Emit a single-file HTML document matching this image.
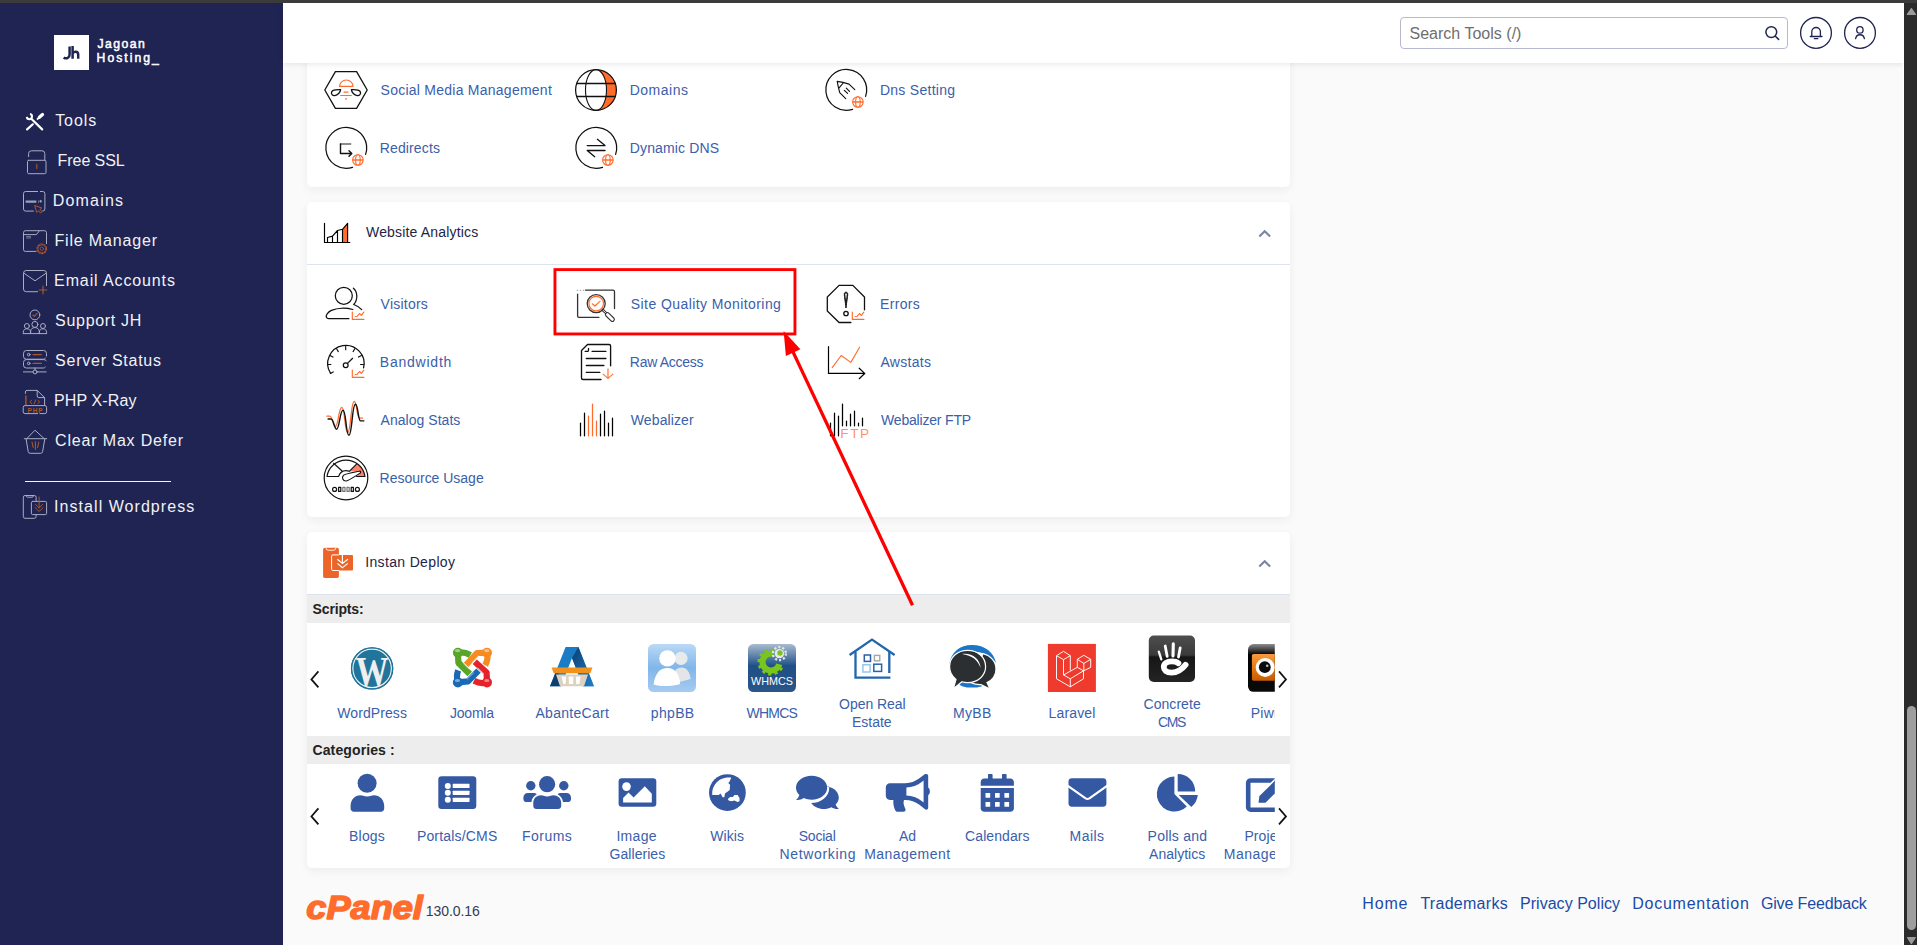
<!DOCTYPE html>
<html lang="en">
<head>
<meta charset="utf-8">
<title>cPanel - Tools</title>
<style>
*{box-sizing:border-box;margin:0;padding:0}
html,body{width:1917px;height:945px;overflow:hidden;background:#fafafa}
body{position:relative;font-family:"Liberation Sans",sans-serif;font-size:14px;color:#1f2552}
.t{position:absolute;line-height:20px;white-space:nowrap}
#topbar{position:absolute;left:0;top:0;width:1917px;height:3px;background:#3b3b3b;z-index:50}
#sidebar{position:absolute;left:0;top:3px;width:283px;height:942px;background:#1f2453}
#logo{position:absolute;left:53.8px;top:31.9px;width:35.3px;height:35px;background:#fff}
#sep{position:absolute;left:25px;top:477.6px;width:146px;height:1.5px;background:#f4f4f6}
#header{position:absolute;left:283px;top:3px;width:1621px;height:60px;background:#fff;box-shadow:0 1px 6px rgba(0,0,0,.10);z-index:20}
#search{position:absolute;left:1117.2px;top:14.2px;width:387.6px;height:31.6px;border:1px solid #b7bace;border-radius:4px;background:#fff}
#hdrtext{position:absolute;left:0;top:0;z-index:21}
#scroll{position:absolute;left:1903px;top:3px;width:14px;height:942px;background:#2b2b2b;border-left:1px solid #fff;z-index:40}
#scroll svg{position:absolute;left:0;top:0}
#thumb{position:absolute;left:3px;top:703px;width:9px;height:224px;background:#9e9e9e;border-radius:4.5px}
.panel{position:absolute;left:307px;width:983px;background:#fff;border-radius:5px;box-shadow:0 3px 10px rgba(0,0,0,.056)}
#p1{top:40px;height:147px}
#p2{top:202px;height:315px}
#p3{top:532px;height:335.5px;overflow:hidden}
.phead{position:absolute;left:0;top:0;width:100%;height:62.7px;border-bottom:1px solid #dde4f0}
.bar{position:absolute;left:0;width:983px;height:28px;background:#ededed}
#car{position:absolute;left:322px;top:624px;width:952.8px;height:243px;overflow:hidden}
#art{position:absolute;left:0;top:0;z-index:10}
#art2{position:absolute;left:0;top:0;z-index:30}
</style>
</head>
<body>
<div id="topbar"></div>
<div id="sidebar">
<div id="logo"></div>
<div id="sep"></div>
</div>
<div class="t" style="left:55.20px;top:111.00px;font-size:16px;letter-spacing:0.937px;color:#f2f2f5">Tools</div>
<div class="t" style="left:57.60px;top:151.00px;font-size:16px;letter-spacing:-0.070px;color:#f2f2f5">Free SSL</div>
<div class="t" style="left:52.70px;top:191.00px;font-size:16px;letter-spacing:1.195px;color:#f2f2f5">Domains</div>
<div class="t" style="left:54.40px;top:231.00px;font-size:16px;letter-spacing:0.850px;color:#f2f2f5">File Manager</div>
<div class="t" style="left:54.10px;top:271.00px;font-size:16px;letter-spacing:0.880px;color:#f2f2f5">Email Accounts</div>
<div class="t" style="left:55.10px;top:311.00px;font-size:16px;letter-spacing:0.691px;color:#f2f2f5">Support JH</div>
<div class="t" style="left:55.10px;top:351.00px;font-size:16px;letter-spacing:0.748px;color:#f2f2f5">Server Status</div>
<div class="t" style="left:54.10px;top:391.00px;font-size:16px;letter-spacing:0.100px;color:#f2f2f5">PHP X-Ray</div>
<div class="t" style="left:55.10px;top:431.00px;font-size:16px;letter-spacing:0.825px;color:#f2f2f5">Clear Max Defer</div>
<div class="t" style="left:54.10px;top:497.00px;font-size:16px;letter-spacing:1.050px;color:#f2f2f5">Install Wordpress</div>
<div class="t" style="left:97.50px;top:34.00px;font-size:12.2px;letter-spacing:1.459px;color:#fff;-webkit-text-stroke:.5px #fff">Jagoan</div>
<div class="t" style="left:96.60px;top:48.00px;font-size:12.2px;letter-spacing:2.011px;color:#fff;-webkit-text-stroke:.5px #fff">Hosting_</div>
<div id="header">
<div id="search"></div>
</div>
<div class="panel" id="p1"></div>
<div class="panel" id="p2"><div class="phead"></div></div>
<div class="panel" id="p3"><div class="phead"></div><div class="bar" style="top:62.5px"></div><div class="bar" style="top:203.7px"></div></div>
<div class="t" style="left:380.60px;top:80.00px;font-size:14px;letter-spacing:0.247px;color:#3a60ab">Social Media Management</div>
<div class="t" style="left:629.70px;top:80.00px;font-size:14px;letter-spacing:0.510px;color:#3a60ab">Domains</div>
<div class="t" style="left:879.90px;top:80.00px;font-size:14px;letter-spacing:0.281px;color:#3a60ab">Dns Setting</div>
<div class="t" style="left:379.70px;top:138.00px;font-size:14px;letter-spacing:0.146px;color:#3a60ab">Redirects</div>
<div class="t" style="left:629.80px;top:138.00px;font-size:14px;letter-spacing:0.133px;color:#3a60ab">Dynamic DNS</div>
<div class="t" style="left:380.60px;top:294.00px;font-size:14px;letter-spacing:0.222px;color:#3a60ab">Visitors</div>
<div class="t" style="left:630.80px;top:294.00px;font-size:14px;letter-spacing:0.420px;color:#3a60ab">Site Quality Monitoring</div>
<div class="t" style="left:880.00px;top:294.00px;font-size:14px;letter-spacing:0.338px;color:#3a60ab">Errors</div>
<div class="t" style="left:379.80px;top:352.00px;font-size:14px;letter-spacing:0.776px;color:#3a60ab">Bandwidth</div>
<div class="t" style="left:629.80px;top:352.00px;font-size:14px;letter-spacing:-0.280px;color:#3a60ab">Raw Access</div>
<div class="t" style="left:880.40px;top:352.00px;font-size:14px;letter-spacing:0.290px;color:#3a60ab">Awstats</div>
<div class="t" style="left:380.60px;top:410.00px;font-size:14px;letter-spacing:0.029px;color:#3a60ab">Analog Stats</div>
<div class="t" style="left:630.80px;top:410.00px;font-size:14px;letter-spacing:0.109px;color:#3a60ab">Webalizer</div>
<div class="t" style="left:881.00px;top:410.00px;font-size:14px;letter-spacing:-0.182px;color:#3a60ab">Webalizer FTP</div>
<div class="t" style="left:379.60px;top:468.00px;font-size:14px;letter-spacing:-0.015px;color:#3a60ab">Resource Usage</div>
<div class="t" style="left:366.00px;top:222.00px;font-size:14px;letter-spacing:0.167px;color:#1d2447">Website Analytics</div>
<div class="t" style="left:365.20px;top:552.00px;font-size:14px;letter-spacing:0.349px;color:#1d2447">Instan Deploy</div>
<div class="t" style="left:312.60px;top:599.00px;font-size:14px;letter-spacing:-0.152px;color:#222;font-weight:bold">Scripts:</div>
<div class="t" style="left:312.50px;top:740.00px;font-size:14px;letter-spacing:0.114px;color:#222;font-weight:bold">Categories :</div>
<div id="car">
<div class="t" style="left:15.30px;top:79.00px;font-size:14px;letter-spacing:0.077px;color:#3a60ab">WordPress</div>
<div class="t" style="left:128.00px;top:79.00px;font-size:14px;letter-spacing:-0.229px;color:#3a60ab">Joomla</div>
<div class="t" style="left:213.50px;top:79.00px;font-size:14px;letter-spacing:0.285px;color:#3a60ab">AbanteCart</div>
<div class="t" style="left:328.80px;top:79.00px;font-size:14px;letter-spacing:0.326px;color:#3a60ab">phpBB</div>
<div class="t" style="left:424.50px;top:79.00px;font-size:14px;letter-spacing:-0.749px;color:#3a60ab">WHMCS</div>
<div class="t" style="left:517.10px;top:70.00px;font-size:14px;letter-spacing:-0.040px;color:#3a60ab">Open Real</div>
<div class="t" style="left:530.00px;top:88.00px;font-size:14px;letter-spacing:-0.021px;color:#3a60ab">Estate</div>
<div class="t" style="left:630.90px;top:79.00px;font-size:14px;letter-spacing:0.333px;color:#3a60ab">MyBB</div>
<div class="t" style="left:726.60px;top:79.00px;font-size:14px;letter-spacing:0.149px;color:#3a60ab">Laravel</div>
<div class="t" style="left:821.50px;top:70.00px;font-size:14px;letter-spacing:0.054px;color:#3a60ab">Concrete</div>
<div class="t" style="left:836.10px;top:88.00px;font-size:14px;letter-spacing:-1.436px;color:#3a60ab">CMS</div>
<div class="t" style="left:928.70px;top:79.00px;font-size:14px;letter-spacing:0.249px;color:#3a60ab">Piwigo</div>
<div class="t" style="left:27.10px;top:202.00px;font-size:14px;letter-spacing:0.170px;color:#3a60ab">Blogs</div>
<div class="t" style="left:94.90px;top:202.00px;font-size:14px;letter-spacing:0.177px;color:#3a60ab">Portals/CMS</div>
<div class="t" style="left:200.00px;top:202.00px;font-size:14px;letter-spacing:0.470px;color:#3a60ab">Forums</div>
<div class="t" style="left:294.40px;top:202.00px;font-size:14px;letter-spacing:0.319px;color:#3a60ab">Image</div>
<div class="t" style="left:287.60px;top:220.00px;font-size:14px;letter-spacing:0.045px;color:#3a60ab">Galleries</div>
<div class="t" style="left:388.30px;top:202.00px;font-size:14px;letter-spacing:0.041px;color:#3a60ab">Wikis</div>
<div class="t" style="left:476.70px;top:202.00px;font-size:14px;letter-spacing:-0.204px;color:#3a60ab">Social</div>
<div class="t" style="left:457.40px;top:220.00px;font-size:14px;letter-spacing:0.673px;color:#3a60ab">Networking</div>
<div class="t" style="left:577.10px;top:202.00px;font-size:14px;letter-spacing:-0.138px;color:#3a60ab">Ad</div>
<div class="t" style="left:542.20px;top:220.00px;font-size:14px;letter-spacing:0.464px;color:#3a60ab">Management</div>
<div class="t" style="left:643.10px;top:202.00px;font-size:14px;letter-spacing:0.073px;color:#3a60ab">Calendars</div>
<div class="t" style="left:747.60px;top:202.00px;font-size:14px;letter-spacing:0.458px;color:#3a60ab">Mails</div>
<div class="t" style="left:825.60px;top:202.00px;font-size:14px;letter-spacing:0.224px;color:#3a60ab">Polls and</div>
<div class="t" style="left:827.10px;top:220.00px;font-size:14px;letter-spacing:0.010px;color:#3a60ab">Analytics</div>
<div class="t" style="left:922.40px;top:202.00px;font-size:14px;letter-spacing:0.086px;color:#3a60ab">Project</div>
<div class="t" style="left:901.80px;top:220.00px;font-size:14px;letter-spacing:0.464px;color:#3a60ab">Management</div>
</div>
<div id="hdrtext">
<div class="t" style="left:1409.50px;top:24.00px;font-size:16px;letter-spacing:0.013px;color:#6e6e6e">Search Tools (/)</div>
</div>
<div class="t" style="left:425.80px;top:901.00px;font-size:14px;letter-spacing:-0.073px;color:#333c55">130.0.16</div>
<div class="t" style="left:1362.30px;top:894.00px;font-size:16px;letter-spacing:0.840px;color:#1b4aa8">Home</div>
<div class="t" style="left:1420.40px;top:894.00px;font-size:16px;letter-spacing:0.282px;color:#1b4aa8">Trademarks</div>
<div class="t" style="left:1520.00px;top:894.00px;font-size:16px;letter-spacing:0.032px;color:#1b4aa8">Privacy Policy</div>
<div class="t" style="left:1632.20px;top:894.00px;font-size:16px;letter-spacing:0.757px;color:#1b4aa8">Documentation</div>
<div class="t" style="left:1760.90px;top:894.00px;font-size:16px;letter-spacing:-0.142px;color:#1b4aa8">Give Feedback</div>
<svg id="art" width="1917" height="945" viewBox="0 0 1917 945">
<!-- ===== panel 1 icons ===== -->
<g fill="none" stroke="#111" stroke-width="1.3" stroke-linejoin="round" stroke-linecap="round">
  <!-- social media hexagon -->
  <path d="M324.8 90 L335.4 71.7 L356.6 71.7 L367.2 90 L356.6 108.3 L335.4 108.3 Z"/>
  <path d="M340.6 89.6 C337 89.4 333 89.4 331.8 91.6 C330.6 94 332.6 95.8 334.8 95.6 C337.6 95.2 340.4 92.4 340.6 89.6 Z"/>
  <path d="M351.4 89.6 C355 89.4 359 89.4 360.2 91.6 C361.4 94 359.4 95.8 357.2 95.6 C354.4 95.2 351.6 92.4 351.4 89.6 Z"/>
  <g stroke="#ff6c2c" stroke-width="1.1">
    <path d="M339.6 86.4 A6.7 6.4 0 0 1 353 86.4 Z"/>
    <path d="M344 92.1 H348" stroke-width="1.4"/>
    <path d="M340.6 95.5 H351.4"/>
    <path d="M345.6 98.8 H346.6" stroke-width="1.2"/>
  </g>
  <!-- domains globe -->
  <path d="M596 69.6 A10.5 20.4 0 0 1 596 110.4 A20.4 20.4 0 0 0 596 69.6 Z" fill="#ff6c2c" stroke="none"/>
  <circle cx="596" cy="90" r="20.4" stroke-width="1.25"/>
  <ellipse cx="596" cy="90" rx="10.5" ry="20.4" stroke-width="1.1"/>
  <path d="M576.8 83.5 H615.2 M576.8 96.5 H615.2" stroke-width="1.35"/>
  <!-- dns setting -->
  <path d="M865.6 96.4 A20.4 20.4 0 1 0 852.6 109.3" stroke-width="1.25"/>
  <path d="M854.8 89.6 L849 84.1 Q843 82.2 837.2 81.4 Q838.2 87 839.7 92.6 L845.7 98.6 M843.2 83 L839.1 87.9 M844.3 90.3 L847.6 93.4 M846.3 88.2 L849.5 91.4" stroke-width="1.15"/>
  <!-- redirects -->
  <path d="M365.6 154.4 A20.4 20.4 0 1 0 352.6 167.3" stroke-width="1.25"/>
  <path d="M350.7 143.9 H340.5" stroke="#666" stroke-width="1.5"/>
  <path d="M340.5 143.9 V153.5 H351.6 M349 150.8 L351.8 153.5 L349 156.2" stroke-width="1.4"/>
  <!-- dynamic dns -->
  <path d="M615.6 154.4 A20.4 20.4 0 1 0 602.6 167.3" stroke-width="1.25"/>
  <path d="M587.2 145.6 H605 L597.4 139.3 M605 150.5 H587.2 L594.7 156.7" stroke-width="1.3"/>
</g>
<!-- small orange globes -->
<g fill="none" stroke="#ff6c2c" stroke-width="1.1">
  <g id="og1"><circle cx="857.9" cy="102" r="5.3"/><ellipse cx="857.9" cy="102" rx="2.3" ry="5.3"/><path d="M852.6 102 H863.2" stroke-width="1.5"/></g>
  <g><circle cx="357.9" cy="160" r="5.3"/><ellipse cx="357.9" cy="160" rx="2.3" ry="5.3"/><path d="M352.6 160 H363.2" stroke-width="1.5"/></g>
  <g><circle cx="607.9" cy="160" r="5.3"/><ellipse cx="607.9" cy="160" rx="2.3" ry="5.3"/><path d="M602.6 160 H613.2" stroke-width="1.5"/></g>
</g>

<!-- ===== panel 2 header icon ===== -->
<g fill="none" stroke="#000" stroke-width="1.15" stroke-linejoin="round" stroke-linecap="round">
  <path d="M342.5 229.3 L347.6 223.3 V242.5 H342.5 Z" fill="#ff6c2c" stroke="none"/>
  <path d="M324.5 223.3 V242.5 H349.8"/>
  <path d="M327.5 242.5 V237.5 L332.5 236.1 L337.5 230.5 L342.5 229.3 L347.6 223.3 V242.5 M332.5 236.1 V242.5 M337.5 230.5 V242.5 M342.5 229.3 V242.5"/>
</g>
<!-- chevrons -->
<g fill="none" stroke="#7a84a4" stroke-width="2.1" stroke-linecap="butt">
  <path d="M1259.3 236.6 L1264.7 231.2 L1270.1 236.6"/>
  <path d="M1259.3 566.6 L1264.7 561.2 L1270.1 566.6"/>
</g>
<!-- ===== panel 2 icons ===== -->
<g fill="none" stroke="#111" stroke-width="1.25" stroke-linejoin="round" stroke-linecap="round">
  <!-- visitors -->
  <circle cx="343.8" cy="295.8" r="8.5"/>
  <path d="M353.4 288.2 C357.6 291.8 358.2 299.6 353.7 304.5 C357 305.6 359.6 307.4 361.7 309.6"/>
  <path d="M352.8 309.5 C346 307.6 337 307.8 331.4 310.4 C327.6 312.2 325.6 315.6 326.4 317.2 C326.8 318.1 327.4 318.5 328.6 318.5 H348.9"/>
  <!-- bandwidth -->
  <path d="M330.6 373.4 A18.2 18.2 0 1 1 363.6 367.8"/>
  <path d="M327.5 364.5 H330.9 M360.5 364.5 H363.9 M345.7 346.3 V349.7 M330 355.4 L332.9 357.1 M336.6 348.7 L338.3 351.6 M354.8 348.7 L353.1 351.6 M361.4 355.4 L358.5 357.1 M330.4 373.5 L333.2 371.9" stroke-width="1.15"/>
  <circle cx="345.7" cy="365.2" r="2.4"/>
  <path d="M347.5 363.4 L352.6 358.3"/>
  <!-- analog stats -->
  <path d="M326.9 416.2 H329.7 C332.6 416.2 333 426.4 335.3 426.4 C338.4 426.4 338.6 407.4 341.8 407.4 C345 407.4 344.6 432.5 347.7 432.5 C351 432.5 350.8 401.4 354.2 401.4 C357 401.4 356.8 418.1 359.4 418.1 H362.6" stroke="#ff6c2c" stroke-width="1.3"/>
  <path d="M328.1 419 H330.9 C333.8 419 334.2 429.2 336.5 429.2 C339.6 429.2 339.8 410.2 343 410.2 C346.2 410.2 345.8 435.3 348.9 435.3 C352.2 435.3 352 404.2 355.4 404.2 C358.2 404.2 358 420.9 360.6 420.9 H363.8" stroke-width="1.4"/>
  <!-- resource usage -->
  <circle cx="346" cy="478" r="21.8" stroke-width="1.2"/>
  <path d="M357 463.6 A23 23 0 0 1 365 476.5 H356.4 L360.6 471.8 L349.3 471.3 Z" fill="#f9836a" stroke="none"/>
  <path d="M327 476.5 H338.6 C339.6 473.4 342.4 470.6 346 470.6 C347.4 470.6 348.4 470.9 349.3 471.3 M327 476.5 A19.2 19.2 0 0 1 365 476.5 H356.6 M333.6 463.3 L342.4 471.3 M357 463.6 L349.3 471.3" stroke-width="1.15"/>
  <path d="M343.4 475.4 C341.6 477.4 342.6 481.2 346.2 481 C348.2 480.9 356 475.8 360 473.2 C361.2 472.4 360.6 470.8 359.2 471.2 C355 472.2 345.2 473.8 343.4 475.4 Z" fill="#fff" stroke-width="1.15"/>
  <g stroke-width="1.2"><circle cx="334.6" cy="489.4" r="2"/><circle cx="357.4" cy="489.4" r="2"/>
  <rect x="338.6" y="487.4" width="2.2" height="4"/><rect x="342.8" y="487.4" width="2.2" height="4" stroke="#777"/><rect x="347" y="487.4" width="2.2" height="4" stroke="#777"/><rect x="351.2" y="487.4" width="2.2" height="4"/></g>
  <!-- site quality monitoring -->
  <g stroke="#333" stroke-width="1.3">
    <path d="M585.5 290.2 H613 Q614.5 290.2 614.5 291.7 V308.5"/>
    <path d="M577.6 294.2 V316 Q577.6 317.4 579 317.4 H598.9"/>
    <path d="M577.2 290.2 h.5 M580.2 290.2 h.5 M583.2 290.2 h.5" stroke="#999" stroke-width="1.1"/>
    <path d="M602.8 310 L606.6 313.6" stroke-width="2.6"/>
    <path d="M603.2 310.4 L606.2 313.2" stroke="#fff" stroke-width="0.9"/>
    <path d="M607.4 314.6 L612.4 319.4" stroke-width="5" />
    <path d="M607.4 314.6 L612.4 319.4" stroke="#fff" stroke-width="2.8"/>
    <circle cx="596.2" cy="303.6" r="9"/>
  </g>
  <circle cx="596.2" cy="303.6" r="7.3" stroke="#ff6c2c" stroke-width="1.2"/>
  <path d="M592.4 303.8 L594.8 306 L600 301.4" stroke="#ff6c2c" stroke-width="1.2"/>
  <!-- raw access -->
  <path d="M610.6 365.7 V346 Q610.6 344.5 609.1 344.5 H587.5 L581.5 350.4 V378 Q581.5 379.5 583 379.5 H601" stroke-width="1.35"/>
  <path d="M588.5 348.4 V350.2 Q588.5 351.4 587.3 351.4 H585.2 M592.1 351.4 H605.9 M586.3 358.5 H605.9 M586.3 365.5 H603.9 M586.3 372.4 H599.8" stroke-width="1.3"/>
  <path d="M608 369 V378" stroke="#ff9c70" stroke-width="1.7"/>
  <path d="M603.1 374.1 L608 378.4 L612.8 374.1" stroke="#ff7a3e" stroke-width="1.2"/>
  <!-- webalizer -->
  <path d="M580.5 423.1 V435.8 M584.5 413.2 V435.8 M600.5 414.2 V435.8 M604.5 411.2 V435.8 M608.5 423.2 V435.8 M612.5 418.2 V435.8" stroke="#000" stroke-width="1.25"/>
  <path d="M588.5 416.1 V435.8 M592.5 404.2 V435.8 M596.5 421.1 V435.8" stroke="#ff6c2c" stroke-width="1.25"/>
  <!-- errors -->
  <path d="M864.5 309.8 V297 L852.8 285.3 H839.1 L827.3 297 V310.9 L839.1 322.5 H850.9" stroke-width="1.3" stroke-linejoin="miter"/>
  <path d="M846 307.6 C845.2 301 844.3 296.6 844.3 294 C844.3 291.6 847.7 291.6 847.7 294 C847.7 296.6 846.8 301 846 307.6 Z" stroke-width="1" fill="#111"/>
  <path d="M846 300 C845.6 297.4 845.3 295.4 845.3 294.2 C845.3 293 846.7 293 846.7 294.2 C846.7 295.4 846.4 297.4 846 300 Z" fill="#fff" stroke="none"/>
  <circle cx="846" cy="313.5" r="2.2" stroke-width="1.3"/>
  <!-- awstats -->
  <path d="M828.5 346.5 V373.4 H864.7 M859.2 368.2 L864.7 373.4 L859.2 378.7" stroke="#000" stroke-width="1.2" stroke-linejoin="miter"/>
  <path d="M832.2 367.6 L841.2 355.5 L850.8 362.4 L859.6 347.2" stroke="#ff6c2c" stroke-width="1.1"/>
  <!-- webalizer ftp -->
  <path d="M830.5 423.1 V435.8 M834.5 413.2 V435.8 M838.5 416.1 V435.8 M842.5 404.2 V425.8 M846.5 421.1 V425.8 M850.5 414.2 V425.8 M854.5 411.2 V425.8 M858.5 423.2 V425.8 M862.5 418.2 V425.8" stroke="#000" stroke-width="1.25"/>
</g>
<text x="840.3" y="438.4" font-family="Liberation Sans, sans-serif" font-size="13.6" letter-spacing="1.6" fill="#ff7d45" fill-opacity=".85">FTP</text>
<!-- orange mini charts -->
<g fill="none" stroke="#ff6c2c" stroke-width="1.15" stroke-linecap="round" stroke-linejoin="round">
  <path d="M352.3 312.1 V319.4 H363.9 M355.2 316.5 L357.3 316.2 L359.5 313.5 L361.4 315.4 L363.8 312.2"/>
  <path d="M352.3 370.1 V377.4 H363.9 M355.2 374.5 L357.3 374.2 L359.5 371.5 L361.4 373.4 L363.8 370.2"/>
  <path d="M852.3 312.1 V319.4 H863.9 M855.2 316.5 L857.3 316.2 L859.5 313.5 L861.4 315.4 L863.8 312.2"/>
</g>

<!-- ===== panel 3 header icon ===== -->
<g>
  <rect x="323.1" y="547.8" width="15.8" height="30.1" rx="1.7" fill="#ec6428"/>
  <path d="M325.9 548 Q326.2 550.2 328.2 550.2 H333.6 Q335.6 550.2 335.9 548" fill="none" stroke="#fff" stroke-width=".9"/>
  <rect x="331.6" y="554.9" width="21.4" height="15.6" rx="1" fill="#ec6428"/>
  <path d="M338.9 554.9 H332.8 Q331.6 554.9 331.6 556.1 V569.3 Q331.6 570.5 332.8 570.5 H338.9" fill="none" stroke="#fff" stroke-width="1"/>
  <path d="M342.4 555 V563 M337.4 559.2 L342.4 563.4 L347.9 559.2 M337.4 563.4 L342.4 567.7 L347.9 563.4" fill="none" stroke="#fff" stroke-width="1.15"/>
</g>
<!-- carousel arrows -->
<g fill="none" stroke="#111" stroke-width="1.7">
  <path d="M318.4 671.4 L311.4 679.4 L318.4 687.4"/>
  <path d="M1279 671.4 L1286 679.4 L1279 687.4"/>
  <path d="M318.4 808.4 L311.4 816.4 L318.4 824.4"/>
  <path d="M1279 808.4 L1286 816.4 L1279 824.4"/>
</g>
<defs>
  <linearGradient id="gphp" x1="0" y1="0" x2="0" y2="1"><stop offset="0" stop-color="#bcd9f6"/><stop offset=".5" stop-color="#80b6ea"/><stop offset="1" stop-color="#a6cbf1"/></linearGradient>
  <linearGradient id="gwh" x1="0" y1="0" x2="0" y2="1"><stop offset="0" stop-color="#a9bbd0"/><stop offset=".42" stop-color="#2a5a8e"/><stop offset=".45" stop-color="#1f4f86"/><stop offset="1" stop-color="#2a5689"/></linearGradient>
  <linearGradient id="gcc" x1="0" y1="0" x2="0" y2="1"><stop offset="0" stop-color="#4e4e4e"/><stop offset=".42" stop-color="#3a3a3a"/><stop offset=".46" stop-color="#161616"/><stop offset="1" stop-color="#242424"/></linearGradient>
  <linearGradient id="gpw" x1="0" y1="0" x2="0" y2="1"><stop offset="0" stop-color="#8c8c8c"/><stop offset=".17" stop-color="#222"/><stop offset=".22" stop-color="#000"/><stop offset="1" stop-color="#0a0a0a"/></linearGradient>
  <linearGradient id="gpo" x1="0" y1="0" x2="0" y2="1"><stop offset="0" stop-color="#f79a40"/><stop offset=".5" stop-color="#e97a12"/><stop offset="1" stop-color="#c65c00"/></linearGradient>
  <linearGradient id="gab" x1="0" y1="0" x2="1" y2="1"><stop offset="0" stop-color="#0c3f70"/><stop offset="1" stop-color="#1f7fca"/></linearGradient>
  <clipPath id="cpiw"><rect x="1240" y="640" width="34.8" height="60"/></clipPath>
  <clipPath id="cprj"><rect x="1230" y="770" width="44.8" height="100"/></clipPath>
</defs>
<!-- WordPress -->
<g>
  <circle cx="372.1" cy="668.4" r="21.2" fill="#21759b"/>
  <circle cx="372.1" cy="668.4" r="19.4" fill="none" stroke="#f1f3f4" stroke-width="1.5"/>
  <text x="372" y="686.4" text-anchor="middle" font-family="Liberation Serif, serif" font-weight="bold" font-size="42" fill="#efefef" textLength="33" lengthAdjust="spacingAndGlyphs">W</text>
  <circle cx="372.1" cy="668.4" r="20.5" fill="none" stroke="#21759b" stroke-width="1.4"/>
</g>
<!-- Joomla -->
<g fill="none" stroke-width="6.2" stroke-linejoin="round">
  <g stroke="#58a527"><path d="M470.4 655 Q464 651.4 457.9 652.7 L458.4 662.8 L469.6 673.9"/><circle cx="457.9" cy="652.7" r="2.2" stroke-width="5.6" fill="#58a527"/></g>
  <g stroke="#f68b24"><path d="M485.2 665.2 Q488.6 659 487 652.7 L477 653 L466.1 664.9"/><circle cx="487" cy="652.7" r="2.2" stroke-width="5.6" fill="#f68b24"/></g>
  <g stroke="#e5232b"><path d="M474 680.8 Q480.6 684.2 487 682.4 L486.6 672.6 L474.8 661.8"/><circle cx="487" cy="682.4" r="2.2" stroke-width="5.6" fill="#e5232b"/></g>
  <g stroke="#1a69b4"><path d="M458.2 670.4 Q455.8 676.6 457.9 682.4 L468 681.4 L478.5 670.7"/><circle cx="457.9" cy="682.4" r="2.2" stroke-width="5.6" fill="#1a69b4"/></g>
  <path d="M458.4 662.8 L469.6 673.9" stroke="#58a527"/>
  <g stroke="#fff" stroke-width="1" opacity=".55" stroke-linecap="round"><path d="M463.4 663.6 L469 669.2"/><path d="M478.6 656 L472 662.4"/><path d="M483.6 673.4 L478 668"/><path d="M467.4 679 L473.6 672.8"/></g>
  <g fill="#fff" stroke="none" opacity=".45"><ellipse cx="457.6" cy="650.6" rx="2.8" ry="1.6"/><ellipse cx="486.8" cy="650.6" rx="2.8" ry="1.6"/><ellipse cx="486.8" cy="680.4" rx="2.6" ry="1.5"/><ellipse cx="457.4" cy="680.4" rx="2.6" ry="1.5"/></g>
</g>
<!-- AbanteCart -->
<g>
  <path d="M550 686.2 L565.6 647 L578.4 647 L593.9 686.2 L583 686.2 L572 658 L561 686.2 Z" fill="#1b7cc6"/>
  <path d="M572 658 L578.4 647 L593.9 686.2 L583 686.2 Z" fill="url(#gab)"/>
  <path d="M550 686.2 L556.4 670.4 L562 678 L561 686.2 Z" fill="#0d3f73"/>
  <path d="M551.6 667.6 L592.4 667.6 L590.4 673.2 L553.6 673.2 Z" fill="#f0921e"/>
  <path d="M556 674.4 L588 674.4 L584 686.2 L560 686.2 Z" fill="#ddd2c0"/>
  <path d="M561.4 676.4 L566.2 676.4 L565.6 684 L563.4 684 Z M568.6 676.4 L573.4 676.4 L573.2 684 L569 684 Z M575.8 676.4 L580.6 676.4 L579.4 684 L576.2 684 Z" fill="#fff"/>
  <path d="M572 658 L577.4 671.8 L566.6 671.8 Z" fill="#fff" opacity="0"/>
</g>
<!-- phpBB -->
<g>
  <rect x="648" y="644" width="48" height="48" rx="5.5" fill="url(#gphp)"/>
  <circle cx="681" cy="658.4" r="6.6" fill="#e9eaec"/>
  <path d="M672 684 C672 672 676 667.4 681.4 667.4 C687 667.4 689.6 672 690.6 679 Z" fill="#e3e5e8"/>
  <circle cx="667.4" cy="658.4" r="8.2" fill="#fff"/>
  <path d="M653.6 684.4 C655 673.4 660 668 667.4 668 C675 668 679.4 674 680.2 684 C672 686.6 661 686.6 653.6 684.4 Z" fill="#fff"/>
</g>
<!-- WHMCS -->
<g>
  <rect x="748" y="644" width="48" height="48" rx="5.5" fill="url(#gwh)"/>
  <path d="M773.2 653.8 A8.5 8.5 0 1 0 779.2 664.2" fill="none" stroke="#79c51c" stroke-width="6.2"/>
  <path d="M774.16 650.2 A12.2 12.2 0 1 0 782.8 665.2" fill="none" stroke="#79c51c" stroke-width="2.8" stroke-dasharray="3.1 3.3"/>
  <circle cx="779.4" cy="653.6" r="4.7" fill="#e6e8ea"/>
  <circle cx="779.4" cy="653.6" r="6.5" fill="none" stroke="#e6e8ea" stroke-width="2.2" stroke-dasharray="2.1 2"/>
  <circle cx="780" cy="653" r="2.7" fill="#79c51c"/>
  <text x="772" y="685" text-anchor="middle" font-family="Liberation Sans, sans-serif" font-size="10.6" fill="#fff" textLength="42" lengthAdjust="spacingAndGlyphs">WHMCS</text>
</g>
<!-- Open Real Estate -->
<g fill="none" stroke="#2266ae" stroke-width="2.3">
  <path d="M849.6 655 L872 639.6 L894.6 655" stroke-linejoin="miter"/>
  <path d="M855.5 652 V677.6 H890.4 M889.3 652 V673"/>
  <rect x="864.3" y="655" width="6.2" height="6.4" stroke-width="1.5" stroke="#2a5ea6"/>
  <rect x="874.4" y="655.4" width="5.4" height="5.4" stroke-width="1.4" stroke="#a6a6a6"/>
  <rect x="862.9" y="664.8" width="7.2" height="7.2" stroke-width="1.4" stroke="#8fc3ee"/>
  <rect x="873.8" y="664.2" width="7.8" height="7.2" stroke-width="1.5" stroke="#2266ae"/>
</g>

<!-- MyBB -->
<g>
  <path d="M949.4 664 C951 652 960 645 972 645 C985 645 994 652.4 996 663 C990 655 982 651.4 972 651.4 C962 651.4 954 655.6 949.4 664 Z" fill="#1b76c9"/>
  <ellipse cx="972" cy="683.6" rx="13" ry="4" fill="#1b76c9"/>
  <path d="M983 653.6 C991 655.6 996 662 996 669 C996 675 992.4 680 987 682.6 L990 689 L981 684.6 C977 684.8 974 684 971 682.6 Z" fill="#2b2f31" stroke="#fff" stroke-width="1.2"/>
  <path d="M967.6 650.4 C978 650.4 985.6 657.4 985.6 666.6 C985.6 675.6 978 682.6 967.6 682.6 C965.6 682.6 963.6 682.4 962 681.8 L953.4 688.6 L956 679.4 C952 676.4 949.6 671.8 949.6 666.6 C949.6 657.4 957.4 650.4 967.6 650.4 Z" fill="#2b2f31" stroke="#fff" stroke-width="1.2"/>
  <path d="M962 654 C972 652.6 980 659 980.6 668 C978 660 972 655.4 962 654 Z" fill="#fff"/>
</g>
<!-- Laravel -->
<g>
  <rect x="1047.9" y="643.9" width="48" height="48.1" fill="#ef3b2d"/>
  <g fill="none" stroke="#fff" stroke-width=".95" stroke-linejoin="round">
    <path d="M1056.5 655.7 L1063.5 651.3 L1070.3 655.7 L1063.5 659.6 Z"/>
    <path d="M1056.5 655.7 V678.8 L1070.3 686.8 L1083.5 678.8 V670.8"/>
    <path d="M1063.5 659.6 V675 L1070.3 678.8 L1083.5 670.8 M1070.3 655.7 V670.4 M1063.5 675 L1077.3 667.3 L1083.5 670.8 M1070.3 678.8 V686.8"/>
    <path d="M1083.8 655.3 L1077.3 659.3 L1083.8 663.4 L1090.7 659.3 Z M1077.3 659.3 V667.3 M1090.7 659.3 V667.4 L1083.5 670.8 M1083.8 663.4 V670.8"/>
  </g>
</g>
<!-- Concrete CMS -->
<g>
  <rect x="1148.8" y="635.6" width="46.2" height="46.4" rx="5" fill="url(#gcc)"/>
  <g fill="none" stroke="#fff" stroke-linecap="round">
    <path d="M1158.8 651.6 L1161.3 659.4" stroke-width="2.3"/>
    <path d="M1165.2 646 L1167.2 656.4" stroke-width="2.8"/>
    <path d="M1173.3 643.8 L1173 656" stroke-width="3.1"/>
    <path d="M1180.2 647.8 L1178.5 657" stroke-width="2.8"/>
    <path d="M1185.6 664.8 C1181.6 670 1177.4 672.6 1171.6 672.6 C1166.2 672.6 1163.8 670 1163.8 667 C1163.8 663.4 1167.2 661.4 1171.6 661.4 C1174.8 661.4 1177 662 1178.4 663.2" stroke-width="5.8"/>
  </g>
</g>
<!-- Piwigo (clipped) -->
<g clip-path="url(#cpiw)">
  <rect x="1248" y="644.1" width="48" height="47.7" rx="5.5" fill="url(#gpw)"/>
  <rect x="1251.9" y="653.9" width="44" height="26.8" rx="1.6" fill="url(#gpo)"/>
  <circle cx="1265.2" cy="667.4" r="9.5" fill="#fff"/>
  <circle cx="1264.8" cy="667.2" r="5.9" fill="#0a0a0a"/>
  <circle cx="1267.2" cy="665.8" r="1.3" fill="#bdbdbd"/>
</g>
<!-- ===== categories ===== -->
<g fill="#3558a2">
  <!-- blogs (user) -->
  <circle cx="367.1" cy="783.3" r="9.5"/>
  <path d="M350.6 808.6 V805.8 C350.6 799.8 354.8 795.2 360.4 795.2 C362.6 795.2 363.8 796.4 367.2 796.4 C370.6 796.4 371.8 795.2 374 795.2 C379.6 795.2 384.2 799.8 384.2 805.8 V808.6 C384.2 810.4 382.8 811.8 381 811.8 H353.8 C352 811.8 350.6 810.4 350.6 808.6 Z"/>
  <!-- portals (list) -->
  <path d="M441.6 776.2 H473 A3.3 3.3 0 0 1 476.3 779.5 V805.8 A3.3 3.3 0 0 1 473 809.1 H441.6 A3.3 3.3 0 0 1 438.3 805.8 V779.5 A3.3 3.3 0 0 1 441.6 776.2 Z"/>
  <g fill="#fff"><circle cx="447.8" cy="785.9" r="3"/><circle cx="447.8" cy="792.8" r="3"/><circle cx="447.8" cy="799.8" r="3"/>
   <rect x="452.7" y="783.8" width="16.8" height="4.2" rx=".6"/><rect x="452.7" y="790.7" width="16.8" height="4.2" rx=".6"/><rect x="452.7" y="797.7" width="16.8" height="4.2" rx=".6"/></g>
  <!-- forums (users) -->
  <circle cx="547.1" cy="784.2" r="8.1"/>
  <path d="M533.3 806 V802.8 C533.3 798 537 795.2 541 795.2 C543 795.2 544.4 796.4 547.2 796.4 C550 796.4 551.4 795.2 553.4 795.2 C557.4 795.2 561.2 798 561.2 802.8 V806 C561.2 807.8 559.8 809.1 558 809.1 H536.4 C534.6 809.1 533.3 807.8 533.3 806 Z"/>
  <circle cx="530.8" cy="785.7" r="4.7"/><circle cx="563.8" cy="785.7" r="4.7"/>
  <path d="M523.4 799 V797.4 C523.4 795 525.4 793 527.8 793 H533.6 C534.8 793 536 793.5 536.8 794.2 C533.8 795.8 531.8 798.6 531.4 801.9 H525.8 C524.4 801.9 523.4 800.6 523.4 799 Z"/>
  <path d="M571 799 V797.4 C571 795 569 793 566.6 793 H560.8 C559.6 793 558.4 793.5 557.6 794.2 C560.6 795.8 562.6 798.6 563 801.9 H568.6 C570 801.9 571 800.6 571 799 Z"/>
  <!-- image -->
  <rect x="618.6" y="778.2" width="37.7" height="28.5" rx="3.2"/>
  <circle cx="626.5" cy="786.6" r="4.3" fill="#fff"/>
  <path d="M623.1 802.4 V797.9 L628.5 792.4 L633.6 797.5 L644.8 786.3 L651.8 793.8 V802.4 Z" fill="#fff"/>
  <!-- wikis (globe) -->
  <circle cx="727.4" cy="792.6" r="18.4"/>
  <path d="M712.3 795 C711.6 787.6 716 781 722 778.8 C725.4 777.6 728.6 777.4 731.3 777.8 L729.3 782.1 L728.2 782.9 L730.1 784.8 L729.7 789.9 L725 793.4 L724.3 797.3 L722.7 797.3 L720.5 793.4 L718.8 795 Z" fill="#fff"/>
  <path d="M727.8 798.9 L730.1 797 L732.9 797 L734.4 795 L737.6 795 L739.5 798.1 L739.5 801.3 L737.6 802 L734.4 800.5 L731.3 801.3 L728.6 800.5 Z" fill="#fff"/>
  <!-- social (comments) -->
  <path d="M823.8 786 C832 786 838.8 791 838.8 797.5 C838.8 800.2 837.6 802.6 835.6 804.6 C836.2 806.2 837.4 807.8 838.9 808.9 C836 809.2 833.4 808.4 831.4 807.2 C829.2 808.4 826.6 809 823.8 809 C818.4 809 813.6 806.6 811.2 803 C821 803 829.2 796.6 829.2 787.9 C829.2 787.2 829.2 786.8 829 786.2 Z"/>
  <path d="M811.6 775.7 C820.2 775.7 827.2 781.1 827.2 787.7 C827.2 794.3 820.2 799.7 811.6 799.7 C808.8 799.7 806.2 799.1 803.9 798.1 C801.8 799.4 799 800.4 795.9 800 C797.6 798.6 798.8 796.8 799.4 795 C797.3 793 796 790.4 796 787.7 C796 781.1 803 775.7 811.6 775.7 Z"/>
  <!-- ad (bullhorn) -->
  <path d="M926.2 773.9 C927.4 773.9 928.2 774.8 928.2 775.9 V787.6 C929.2 788.4 929.9 789.8 929.9 791.4 C929.9 793 929.2 794.4 928.2 795.2 V807.7 C928.2 809.3 926.4 810.3 925 809.3 L919.4 804.8 C915.2 801.6 910.4 799.9 905.4 799.9 H904 C903.6 801.4 903.4 803 903.8 804.6 C904 806 904.6 807.2 905.2 808.4 C906.2 810 905.2 811.8 903.4 811.8 H897.6 C896.6 811.8 895.8 811.3 895.4 810.5 C893.8 807.3 893 803.7 893.4 799.9 H890 C887.6 799.9 885.8 798.1 885.8 795.8 V787.4 C885.8 785.1 887.6 783.2 890 783.2 H905.4 C910.4 783.2 915.2 781.5 919.4 778.3 L925 773.9 C925.4 773.9 925.8 773.9 926.2 773.9 Z"/>
  <path d="M923.6 780.6 L922 781.8 C917.4 785.4 912 787.4 906.4 787.5 V795.6 C912 795.7 917.4 797.7 922 801.3 L923.6 802.5 Z" fill="#fff"/>
  <!-- calendar -->
  <path d="M980.7 785.7 V782.2 C980.7 780.2 982.3 778.6 984.3 778.6 H988 V774.9 C988 774.3 988.5 773.9 989 773.9 H991.6 C992.2 773.9 992.6 774.3 992.6 774.9 V778.6 H1002 V774.9 C1002 774.3 1002.5 773.9 1003 773.9 H1005.6 C1006.2 773.9 1006.6 774.3 1006.6 774.9 V778.6 H1010.3 C1012.3 778.6 1013.9 780.2 1013.9 782.2 V785.7 Z"/>
  <path d="M980.7 788 H1013.9 V808.2 C1013.9 810.2 1012.3 811.8 1010.3 811.8 H984.3 C982.3 811.8 980.7 810.2 980.7 808.2 Z"/>
  <g fill="#fff"><rect x="985.5" y="793.1" width="4.7" height="4.7" rx=".5"/><rect x="995" y="793.1" width="4.7" height="4.7" rx=".5"/><rect x="1004.4" y="793.1" width="4.7" height="4.7" rx=".5"/>
  <rect x="985.5" y="802" width="4.7" height="4.7" rx=".5"/><rect x="995" y="802" width="4.7" height="4.7" rx=".5"/><rect x="1004.4" y="802" width="4.7" height="4.7" rx=".5"/></g>
  <!-- mail -->
  <rect x="1068.5" y="778.2" width="37.9" height="28.5" rx="3.4"/>
  <path d="M1067.5 785.6 L1085.6 798.4 Q1087.5 799.6 1089.4 798.4 L1107.4 785.6" fill="none" stroke="#fff" stroke-width="2.2"/>
  <!-- polls (pie) -->
  <path d="M1174.4 776.6 V794 L1186.8 806.4 A17.5 17.5 0 1 1 1174.4 776.6 Z"/>
  <path d="M1177.7 773.9 A17.5 17.5 0 0 1 1195.2 791.4 H1177.7 Z"/>
  <path d="M1178.7 795.1 H1197.8 A17.6 17.6 0 0 1 1191.4 806.9 Z"/>
  <!-- project (edit) clipped -->
  <g clip-path="url(#cprj)">
    <rect x="1248.2" y="780.5" width="34" height="29.2" rx="2.5" fill="none" stroke="#3558a2" stroke-width="4.6"/>
    <path d="M1276 778.6 L1258.6 795.6 L1257.6 803.6 L1266 803.2 L1276 793.4 Z" stroke="#fff" stroke-width="1.6"/>
  </g>
</g>

<!-- cPanel wordmark -->
<text x="306.3" y="919.3" font-family="Liberation Sans, sans-serif" font-size="33.4" font-weight="bold" font-style="italic" fill="#ff6c2c" stroke="#ff6c2c" stroke-width="1.5" stroke-linejoin="round" textLength="116.6" lengthAdjust="spacingAndGlyphs">cPanel</text>

</svg>
<svg id="art2" width="1917" height="945" viewBox="0 0 1917 945">
<!-- ===== sidebar ===== -->
<g fill="none" stroke="#1f2453" stroke-width="2.5" stroke-linecap="butt" stroke-linejoin="round">
  <path d="M69.6 46.4 V54.4 C69.6 58 66.6 59.2 63.6 57.6"/>
  <path d="M72.6 46 V58.8 M72.6 53.6 C73.8 51 78.2 50.8 78.2 54.6 V58.8"/>
</g>
<!-- tools -->
<g fill="none" stroke="#fff" stroke-linecap="round">
  <path d="M30 114.07 A2.6 2.6 0 1 1 26.81 116.83" stroke-width="2" stroke-linecap="butt"/>
  <path d="M31.3 118.7 L42.2 129.4" stroke-width="2.2"/>
  <path d="M42.5 114.5 L39.4 117.2" stroke-width="3.3"/>
  <path d="M39.6 117 L37 119.6" stroke-width="1.8" stroke-linecap="butt"/>
  <path d="M32.8 124.3 L27.1 129.4" stroke-width="2.2"/>
</g>
<g fill="none" stroke="#a9acc3" stroke-width="1" stroke-linecap="round" stroke-linejoin="round">
  <!-- free ssl lock -->
  <rect x="27.5" y="160.3" width="18.5" height="13.4" rx="1.2"/>
  <path d="M28.6 156.6 V153.6 Q28.6 150.8 31.4 150.8 H42 Q44.8 150.8 44.8 153.6 V160.3"/>
  <path d="M36.8 164.4 V168.4" stroke="#a9572f" stroke-width="1.1"/>
  <!-- domains -->
  <path d="M37.6 191.5 H25.6 Q23.5 191.5 23.5 193.6 V209 Q23.5 211.1 25.6 211.1 H33.4 M40.4 191.5 H42.8 Q44.9 191.5 44.9 193.6 V209 Q44.9 211.1 42.8 211.1"/>
  <path d="M25.6 201.6 H36.4 M38.2 201.6 h.6 M39.8 201.8 L41.6 200.6" stroke-width="2.2" stroke="#9da1b8" stroke-linecap="butt"/>
  <path d="M35 205.6 L41.8 208 L40 209.4 L42 211.8 L40.4 213 L38.6 210.6 L37 212.2 Z" stroke="#a9572f" stroke-width="1"/>
  <!-- file manager -->
  <path d="M36 251.4 H25.4 Q23.5 251.4 23.5 249.5 V232.6 Q23.5 230.7 25.4 230.7 H44.6 Q46.5 230.7 46.5 232.6 V243.6 M23.8 234.6 H36.4 L39.2 231"/>
  <path d="M26.6 236.6 H30.6 M26.6 238 H30.6" stroke-width=".8" stroke="#8f93ad"/>
  <circle cx="41.8" cy="248.8" r="4.8" stroke="#a9572f" stroke-width="1.1" stroke-dasharray="1.5 1.5"/>
  <circle cx="41.8" cy="248.8" r="3.9" stroke="#a9572f" stroke-width=".8"/>
  <circle cx="41.8" cy="248.8" r="1.7" stroke="#a9572f" stroke-width=".8"/>
  <!-- email -->
  <path d="M37.6 291.7 H26.2 Q23.5 291.7 23.5 289 V273.2 Q23.5 270.5 26.2 270.5 H43.8 Q46.5 270.5 46.5 273.2 V285.6"/>
  <path d="M24.2 273.4 L35 280.8 L45.8 273.4"/>
  <path d="M43 286.2 V293.8 M39.2 290 H46.8" stroke="#a9572f" stroke-width="1.2"/>
  <!-- support -->
  <circle cx="34.9" cy="314.9" r="4.9"/>
  <path d="M32.8 315 L34.4 316.4 L37.2 313.4" stroke="#a9572f" stroke-width="1.1"/>
  <circle cx="26.9" cy="326" r="2.5"/><circle cx="34.9" cy="324.4" r="3"/><circle cx="43" cy="326" r="2.5"/>
  <path d="M23.3 333.6 V332.4 C23.3 330 24.8 328.8 26.9 328.8 C29 328.8 30.6 330 30.6 332.4 V333.6 M39.3 333.6 V332.4 C39.3 330 40.8 328.8 43 328.8 C45 328.8 46.6 330 46.6 332.4 V333.6 M30.6 333.6 V331.6 C30.6 329 32.4 327.6 34.9 327.6 C37.4 327.6 39.3 329 39.3 331.6 V333.6 M23.3 333.6 H46.6"/>
  <!-- server status -->
  <path d="M45.4 358.2 Q44.6 359.2 43.6 359.2 H26.4 Q23.5 359.2 23.5 356.4 V353.4 Q23.5 350.5 26.4 350.5 H43.6 Q46.5 350.5 46.5 353.4 V356"/>
  <path d="M45.4 367 Q44.6 368 43.6 368 H26.4 Q23.5 368 23.5 365.2 V362.4 Q23.5 359.6 26.4 359.6 H43.6 Q45.4 359.6 46.2 360.6"/>
  <circle cx="28.7" cy="354.6" r="1.3"/><circle cx="28.7" cy="363.4" r="1.3"/>
  <path d="M33 354.6 H41.4 M33 363.4 H41.4" stroke="#a9572f" stroke-width="1.1"/>
  <path d="M35 368 V370 M23.4 371.9 H33 M37 371.9 H46.2"/>
  <circle cx="35" cy="371.9" r="2"/>
  <!-- php x-ray -->
  <path d="M25.4 393.4 V392 Q25.4 390.4 27 390.4 H37.2 L44.6 397.6 V405.6 M37.2 390.4 V396 Q37.2 397.6 38.8 397.6 H44.6"/>
  <path d="M40 413.6 H44.8 Q46.6 413.6 46.6 411.8 V407.4 Q46.6 405.6 44.8 405.6 H25 Q23.2 405.6 23.2 407.4 V411.8 Q23.2 413.6 25 413.6 H37.6"/>
  <path d="M25.9 396 V404.4" stroke="#a9572f" stroke-width="1.4"/>
  <path d="M31.6 400.2 L30 401.9 L31.6 403.6 M34.2 403.8 L35.6 400 M38 400.2 L39.6 401.9 L38 403.6" stroke="#a9572f" stroke-width="1"/>
  <!-- clear max defer (basket) -->
  <path d="M24.3 438.7 H46.7 M26.7 438.7 L35 430.2 L44.2 438.7 M26.1 438.9 L28.2 451.6 Q28.5 453.3 30.2 453.3 H40.6 Q42.3 453.3 42.6 451.6 L44.8 438.9"/>
  <path d="M32 442 L33.2 447.4 M35.4 441.6 V449.4 M38.8 442 L37.6 447.4" stroke="#a9572f" stroke-width="1.1"/>
  <!-- install wordpress -->
  <path d="M36.1 501.2 V497.2 Q36.1 495.5 34.4 495.5 H25 Q23.3 495.5 23.3 497.2 V516.6 Q23.3 518.3 25 518.3 H34.4 Q36.1 518.3 36.1 516.6 V514.8 M26 495.6 Q26 497.2 27.6 497.2 H32 Q33.6 497.2 33.6 495.6"/>
  <rect x="31.4" y="501.4" width="15.2" height="13.2" rx="1.2" fill="#1f2453"/>
  <path d="M39.1 497 V508 M35.6 504.4 L39.1 508 L42.6 504.4 M35 507.6 L39.1 511.4 L43.2 507.6" stroke="#a9572f" stroke-width="1"/>
</g>
<text x="27.6" y="412.5" font-family="Liberation Sans, sans-serif" font-size="6.6" font-weight="bold" fill="#a9572f" letter-spacing=".8">PHP</text>
<!-- ===== header icons ===== -->
<g fill="none" stroke="#1f2453" stroke-width="1.5" stroke-linecap="round" stroke-linejoin="round">
  <circle cx="1771.3" cy="32.1" r="5.4"/><path d="M1775.4 36.2 L1778.6 39.4"/>
  <circle cx="1816" cy="32.9" r="15.4" stroke-width="1.3"/>
  <circle cx="1860" cy="32.9" r="15.4" stroke-width="1.3"/>
  <path d="M1811.8 36.4 V31.8 A4.3 4.3 0 0 1 1820.4 31.8 V36.4 M1810.3 36.5 H1822 M1814.4 38.7 H1817.8" stroke-width="1.3"/>
  <circle cx="1859.9" cy="29.9" r="3.2" stroke-width="1.3"/>
  <path d="M1855.6 38.7 A4.5 5 0 0 1 1864.4 38.7" stroke-width="1.3"/>
</g>

<!-- annotation -->
<rect x="554.95" y="269.6" width="240" height="64.35" fill="none" stroke="#ff0000" stroke-width="2.9"/>
<line x1="912.5" y1="605.2" x2="790.4" y2="346.4" stroke="#ff0000" stroke-width="3.3"/>
<polygon points="783.6,331.1 800.4,349.3 785.9,356.1" fill="#ff0000"/>

</svg>
<div id="scroll"><div id="thumb"></div>
<svg width="13" height="942" viewBox="0 0 13 942"><path d="M3.4 11.4 L7.4 5.6 L11.4 11.4 Z" fill="#9b9b9b" stroke="#9b9b9b" stroke-width="1.2" stroke-linejoin="round"/><path d="M3.6 934.6 L7.4 940.6 L11.2 934.6 Z" fill="#9b9b9b" stroke="#9b9b9b" stroke-width="1.2" stroke-linejoin="round"/></svg>
</div>
</body>
</html>
